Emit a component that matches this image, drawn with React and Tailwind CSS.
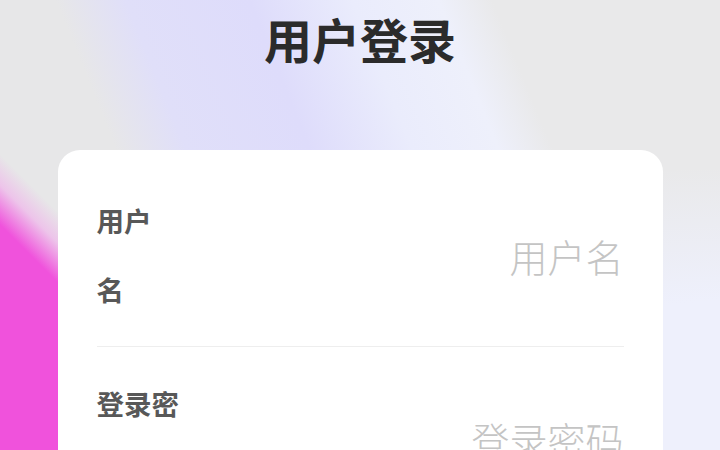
import React from "react";

const font = { fontFamily: '"Noto Sans CJK SC", "Noto Sans", sans-serif' };

function Field({ lines, placeholder, divider }) {
  return (
    <div className={`flex items-center py-[22px] ${divider ? "border-b border-[#eeeeee]" : ""}`}>
      <div className="w-[92px] shrink-0 text-[27.5px] leading-[69px] font-bold text-[#585858]">
        {lines.map((l, i) => (
          <div key={i}>{l}</div>
        ))}
      </div>
      <input
        className="flex-1 min-w-0 bg-transparent text-right text-[38px] font-light outline-none placeholder:text-[#c4c4c4]"
        placeholder={placeholder}
        style={font}
      />
    </div>
  );
}

export default function App() {
  return (
    <div className="relative w-[720px] h-[450px] overflow-hidden bg-[#e8e8e9]" style={font}>
      <div className="absolute inset-0 bg-[linear-gradient(68deg,#e7e7e8_0px,#e7e7e8_220px,#e0dff9_285px,#dedcfb_400px,#eaecfc_495px,#eef0fb_575px,#e9e9ea_625px)]" />
      <div className="absolute inset-0 bg-[radial-gradient(ellipse_at_100%_85%,#eef0fc_0%,#eef0fc_15%,transparent_40%)]" />
      <div className="absolute inset-0 bg-[linear-gradient(225deg,transparent_0px,transparent_618px,#edc4ea_640px,#f052dc_668px,#f052dc_100%)]" />

      <div className="relative flex flex-col items-center">
        <h1 className="mt-[14px] text-[48px] leading-[48px] font-bold text-[#2b2b2b]">用户登录</h1>
        <div className="mt-[88px] w-[605px] rounded-[22px] bg-white px-[39px] pt-[14px] pb-[40px]">
          <Field lines={["用户", "名"]} placeholder="用户名" divider />
          <Field lines={["登录密", "码"]} placeholder="登录密码" />
        </div>
      </div>
    </div>
  );
}
